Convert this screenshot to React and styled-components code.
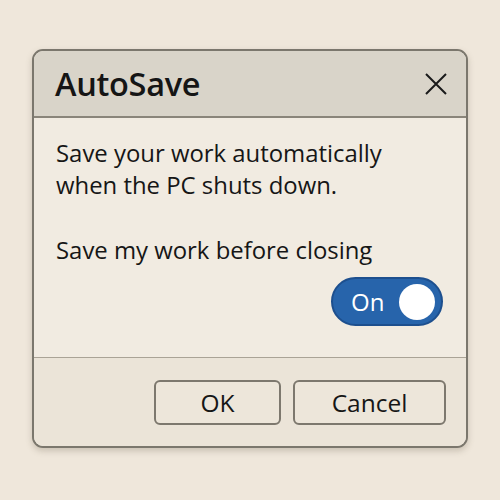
import React, { useState } from "react";
import styled, { createGlobalStyle } from "styled-components";

const Global = createGlobalStyle`
  html, body {
    margin: 0;
    background: #efe7db;
    font-family: "Open Sans", "Noto Sans", sans-serif;
  }
`;

const Page = styled.div`
  width: 500px;
  height: 500px;
  padding: 49px 0 0 32px;
  box-sizing: border-box;
`;

const Dialog = styled.div`
  width: 436px;
  height: 399px;
  box-sizing: border-box;
  border: 2.5px solid #7b776d;
  border-radius: 11px;
  overflow: hidden;
  display: flex;
  flex-direction: column;
  background: #f1ebe1;
  box-shadow: 0 3px 6px rgba(90, 80, 60, 0.25);
`;

const TitleBar = styled.div`
  height: 65px;
  flex: none;
  display: flex;
  align-items: center;
  justify-content: space-between;
  padding: 0 14px 0 21px;
  background: #d9d4c9;
  border-bottom: 2px solid #8a857a;
`;

const Title = styled.h1`
  margin: 0;
  font-size: 32.5px;
  font-weight: 600;
  color: #151515;
  letter-spacing: -0.3px;
`;

const Close = styled.button`
  width: 32px;
  height: 32px;
  padding: 0;
  border: none;
  background: none;
  display: flex;
  align-items: center;
  justify-content: center;
  cursor: pointer;
`;

const Body = styled.div`
  flex: 1;
  padding: 19px 22px 0 22px;
  display: flex;
  flex-direction: column;
  border-bottom: 1.5px solid #aaa396;
`;

const Text = styled.p`
  margin: 0 0 ${(p) => p.gap || 0}px;
  font-size: 23.9px;
  line-height: 32px;
  color: #161616;
  white-space: nowrap;
`;

const ToggleRow = styled.div`
  display: flex;
  justify-content: flex-end;
  margin-top: 11px;
  padding-right: 1px;
`;

const Toggle = styled.button`
  width: 112px;
  height: 49px;
  border-radius: 25px;
  border: 2px solid #1d4f8e;
  background: #2764ab;
  display: flex;
  align-items: center;
  justify-content: space-between;
  padding: 0 6px 0 18px;
  box-sizing: border-box;
  cursor: pointer;
  font-family: inherit;
`;

const ToggleLabel = styled.span`
  color: #fff;
  font-size: 24px;
  font-weight: 500;
`;

const Knob = styled.span`
  width: 36px;
  height: 36px;
  border-radius: 50%;
  background: #fff;
`;

const Footer = styled.div`
  height: 88px;
  flex: none;
  background: #ebe4d8;
  display: flex;
  justify-content: flex-end;
  align-items: flex-start;
  gap: 12px;
  padding: 22px 20px 0 0;
  box-sizing: border-box;
`;

const Button = styled.button`
  width: ${(p) => p.w}px;
  height: 45px;
  border: 2px solid #7d786e;
  border-radius: 6px;
  background: #ede6da;
  font-family: inherit;
  font-size: 24.5px;
  color: #161616;
  cursor: pointer;
`;

export default function App() {
  const [on, setOn] = useState(true);
  return (
    <Page>
      <Global />
      <Dialog>
        <TitleBar>
          <Title>AutoSave</Title>
          <Close aria-label="Close">
            <svg width="24" height="24" viewBox="0 0 24 24">
              <path d="M2 2 L22 22 M22 2 L2 22" stroke="#1a1a1a" strokeWidth="2" />
            </svg>
          </Close>
        </TitleBar>
        <Body>
          <Text gap={33}>
            Save your work automatically
            <br />
            when the PC shuts down.
          </Text>
          <Text>Save my work before closing</Text>
          <ToggleRow>
            <Toggle onClick={() => setOn(!on)}>
              <ToggleLabel>{on ? "On" : "Off"}</ToggleLabel>
              <Knob />
            </Toggle>
          </ToggleRow>
        </Body>
        <Footer>
          <Button w={127}>OK</Button>
          <Button w={153}>Cancel</Button>
        </Footer>
      </Dialog>
    </Page>
  );
}
